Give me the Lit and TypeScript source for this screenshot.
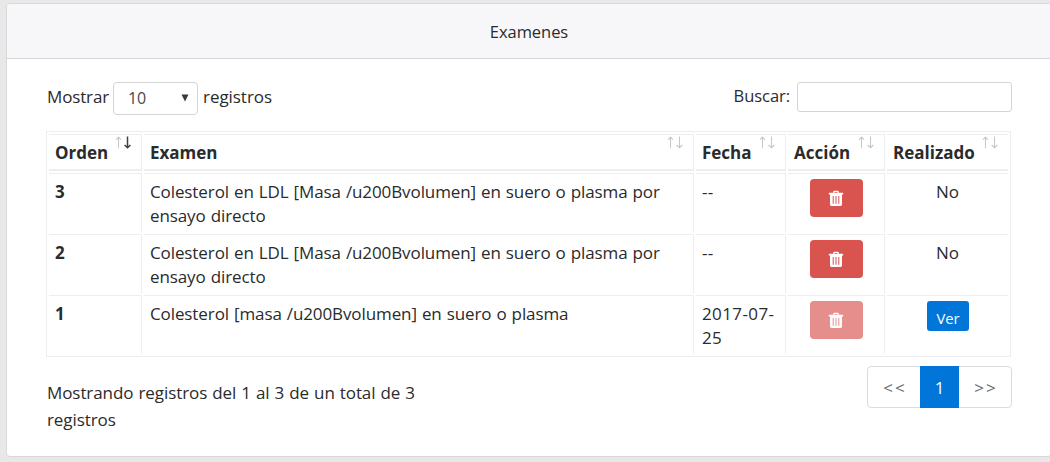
import { LitElement, html, css, svg } from "lit";
import { customElement, property } from "lit/decorators.js";
import { classMap } from "lit/directives/class-map.js";

interface Exam {
  order: number;
  name: string;
  date: string;
  done: boolean;
}

const EXAMS: Exam[] = [
  { order: 3, name: "Colesterol en LDL [Masa /u200Bvolumen] en suero o plasma por ensayo directo", date: "--", done: false },
  { order: 2, name: "Colesterol en LDL [Masa /u200Bvolumen] en suero o plasma por ensayo directo", date: "--", done: false },
  { order: 1, name: "Colesterol [masa /u200Bvolumen] en suero o plasma", date: "2017-07-25", done: true },
];

const COLUMNS = ["Orden", "Examen", "Fecha", "Acción", "Realizado"];

@customElement("sort-arrows")
export class SortArrows extends LitElement {
  @property({ type: Boolean }) active = false;

  static styles = css`
    :host { display: block; width: 17px; height: 13px; }
    svg { display: block; }
    .arrow { fill: none; stroke: #c6c8ca; stroke-width: 1.1; }
    .on { stroke: #2b4a50; stroke-width: 1.5; }
  `;

  render() {
    return html`<svg width="17" height="13" viewBox="0 0 17 13">
      ${svg`<path class="arrow" d="M3.5 12.3V1M1 3.6L3.5 1L6 3.6"/>
      <path class=${classMap({ arrow: true, on: this.active })} d="M12.5 .5V11.5M9.6 9L12.5 11.7L15.4 9"/>`}
    </svg>`;
  }
}

@customElement("app-root")
export class AppRoot extends LitElement {
  static styles = css`
    :host {
      display: block; box-sizing: border-box; height: 462px; padding: 3px 0 5px 6px;
      overflow: hidden; background: #e8e8e8; color: #292b2c;
      font: 17px/24px "Open Sans", "Noto Sans", sans-serif; letter-spacing: -0.05px;
    }
    * { box-sizing: border-box; }
    .card { width: 1046px; height: 454px; background: #fff; border: 1px solid #d9d9da; border-radius: 4px; overflow: hidden; }
    .title { height: 55px; padding-top: 16px; text-align: center; background: #f7f7f9; border-bottom: 1px solid #d5d6d8; font-size: 16.5px; }
    .body { padding: 23px 39px 0; }
    .controls { display: flex; justify-content: space-between; height: 49px; width: 966px; }
    .length { display: flex; height: 33px; align-items: center; gap: 5px; padding-bottom: 3px; margin-left: 1px; }
    .length > span:first-child { width: 61px; letter-spacing: -0.15px; }
    .pick { display: flex; align-items: center; justify-content: space-between; width: 85px; height: 33px; margin-bottom: -3px; padding: 0 8px 2px 14px; border: 1px solid #d4d5d6; border-radius: 4px; color: #464a4c; font-size: 16px; }
    .search { display: flex; align-items: center; gap: 7px; height: 30px; }
    .search input { width: 215px; height: 30px; padding: 4px 8px; border: 1px solid #d4d5d6; border-radius: 3px; outline: 0; background: #fff; font: inherit; }
    .search span { padding-bottom: 2px; font-size: 16.5px; }
    table { width: 965px; table-layout: fixed; border: 1px solid #eceeef; border-collapse: separate; border-spacing: 2px; }
    .c0 { width: 93px; } .c1 { width: 550px; } .c2 { width: 90px; } .c3 { width: 97px; } .c4 { width: 121px; }
    th, td { padding: 6px 5px 0 6px; vertical-align: top; border-top: 1px solid #eceeef; border-right: 1px solid #eceeef; text-align: left; }
    th:last-child, td:last-child { border-right: 0; }
    tbody tr { height: 59px; }
    thead tr { height: 37px; }
    th { letter-spacing: 0; }
    thead th { border-bottom: 2px solid #eceeef; }
    td:nth-child(2) { letter-spacing: -0.1px; word-spacing: 0.7px; }
    td:nth-child(3) { letter-spacing: 0.4px; }
    .head { display: flex; justify-content: space-between; height: 24px; }
    .head sort-arrows { margin: -5px 4px 0 0; }
    td.mid { text-align: center; padding-left: 5px; }
    td.btn { padding-top: 5px; }
    button { border: 0; font: inherit; letter-spacing: inherit; color: #fff; }
    .trash { display: inline-flex; align-items: center; justify-content: center; width: 53px; height: 38px; padding: 0; border-radius: 4px; background: #d9534f; vertical-align: top; }
    .trash:disabled { opacity: .65; }
    .see { width: 42px; height: 30px; padding: 3px 0 0 1px; border-radius: 3px; background: #0275d8; font-size: 14.8px; vertical-align: top; }
    .foot { display: flex; justify-content: space-between; width: 966px; padding-top: 9px; }
    .info { width: 400px; padding-top: 13px; margin-left: 1px; line-height: 27px; letter-spacing: -0.08px; word-spacing: 0.7px; }
    .pages { display: flex; width: 145px; height: 42px; border: 1px solid #d9dbdc; border-radius: 4px; }
    .page { flex: 1; display: flex; align-items: center; justify-content: center; color: #636c72; letter-spacing: 2.1px; padding: 1px 0 0 2px; }
    .current { flex: 0 0 39px; margin: -1px 0; padding-left: 0; background: #0275d8; color: #fff; letter-spacing: 0; }
  `;

  private trash() {
    return html`<svg width="16" height="17" viewBox="0 0 16 18" preserveAspectRatio="none">
      <path fill="#fff" fill-rule="evenodd" d="M5.2 3V1.8Q5.2.9 6.2.9H9.8Q10.8.9 10.8 1.8V3H14.6Q15.2 3 15.2 3.7V4.8H14V15Q14 17 12.2 17H3.8Q2 17 2 15V4.8H.8V3.7Q.8 3 1.4 3ZM6.5 3H9.5V2.1H6.5ZM4.7 6.4V14.5H5.7V6.4ZM7.5 6.4V14.5H8.5V6.4ZM10.3 6.4V14.5H11.3V6.4Z"/>
    </svg>`;
  }

  private row(e: Exam) {
    return html`<tr>
      <th>${e.order}</th>
      <td>${e.name}</td>
      <td>${e.date}</td>
      <td class="mid btn"><button class="trash" ?disabled=${e.done} aria-label="Eliminar">${this.trash()}</button></td>
      <td class=${classMap({ mid: true, btn: e.done })}>${e.done ? html`<button class="see">Ver</button>` : "No"}</td>
    </tr>`;
  }

  render() {
    return html`<section class="card">
      <header class="title">Examenes</header>
      <div class="body">
        <div class="controls">
          <div class="length">
            <span>Mostrar</span>
            <span class="pick">10<svg width="8" height="8" viewBox="0 0 8 8"><path fill="#373a3c" d="M.5 .5H7.5L4 7.5Z"/></svg></span>
            <span>registros</span>
          </div>
          <label class="search"><span>Buscar:</span><input type="search" /></label>
        </div>
        <table>
          <colgroup>${COLUMNS.map((_, i) => html`<col class="c${i}" />`)}</colgroup>
          <thead><tr>${COLUMNS.map((c, i) => html`<th><div class="head">${c}<sort-arrows ?active=${i === 0}></sort-arrows></div></th>`)}</tr></thead>
          <tbody>${EXAMS.map((e) => this.row(e))}</tbody>
        </table>
        <div class="foot">
          <div class="info">Mostrando registros del 1 al 3 de un total de 3 registros</div>
          <nav class="pages"><span class="page">&lt;&lt;</span><span class="page current">1</span><span class="page">&gt;&gt;</span></nav>
        </div>
      </div>
    </section>`;
  }
}
